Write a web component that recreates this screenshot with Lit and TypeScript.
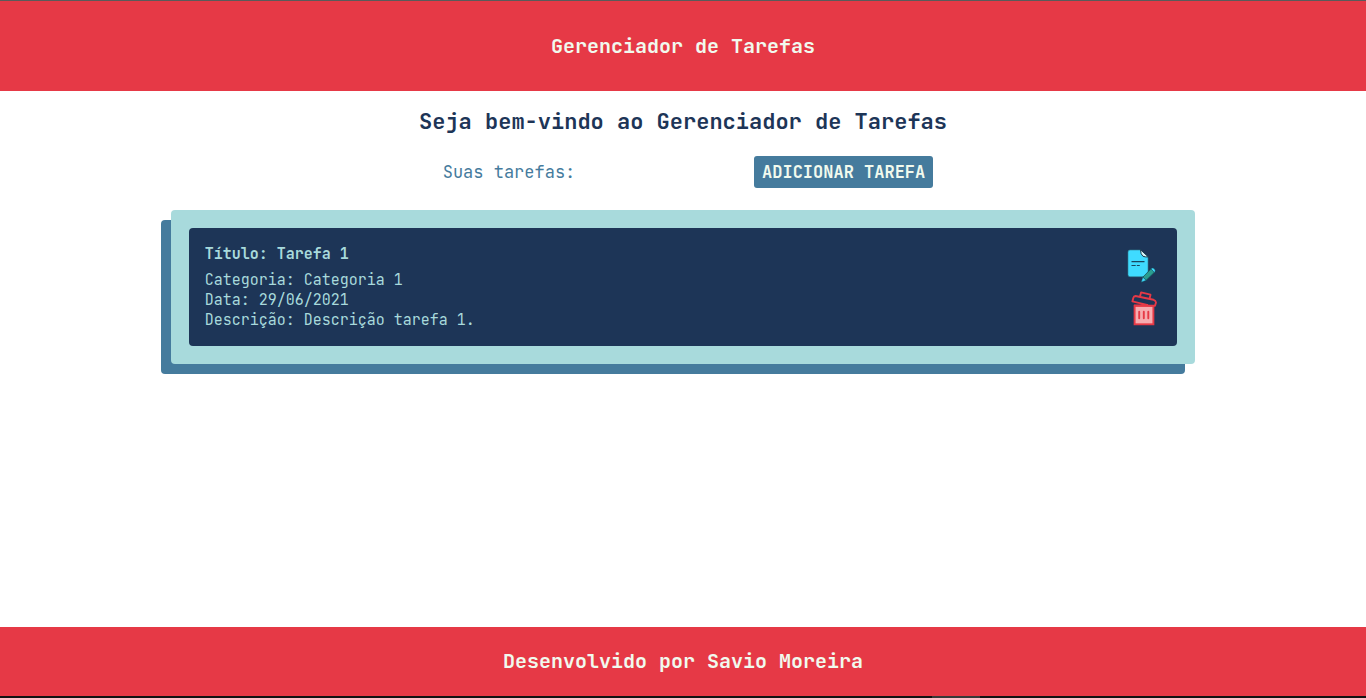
import { LitElement, html, css, svg } from "lit";
import { customElement, property, state } from "lit/decorators.js";

interface Task {
  title: string;
  category: string;
  date: string;
  description: string;
}

const editIcon = svg`
  <path d="M5 3H15.500L23 10V28Q23 29.700 21.300 29.700H5Q3 29.700 3 27.700V5Q3 3 5 3Z" fill="#3fdbff" stroke="#2f7f91" stroke-width=".6"/>
  <path d="M15.500 2.700L23.300 9.900Q20.500 10.200 18 9.300Q15.500 7.500 15.500 2.700Z" fill="#d9f5f8" stroke="#1b3a4b" stroke-width="1"/>
  <path d="M6.500 14.600H19.500M6.500 18.500H10.700M11.800 18.500H14.800" stroke="#17465f" stroke-width="1.100"/>
  <path d="M17.800 30.200L26 21.800L29.300 25.400L21.200 33.300Z" fill="#2a9d8f" stroke="#17505c" stroke-width=".8"/>
  <path d="M26 21.800L27.300 21Q28.500 21 29.700 22.300Q30.600 23.500 30 24.500L29.300 25.400ZM17.800 30.200L16.200 35.300L21.200 33.300Z" fill="#3fdbff" stroke="#17505c" stroke-width=".5"/>`;

const trashIcon = svg`
  <rect x="9.600" y="14.800" width="18.800" height="18.500" fill="#f6acb0" stroke="#e63946" stroke-width="1.900"/>
  <path d="M14.200 20.700V27.300M18.800 20.700V27.300M23.300 20.700V27.300" stroke="#e63946" stroke-width="1.900" stroke-linecap="round"/>
  <path d="M9 14.500L28.500 14.800L30 14.700L31 11.500Q30.800 9.500 28.500 8.800L10.500 5Q8.800 5 8.300 7L7.400 10.400L23 14.200" fill="#1d3557" stroke="#e63946" stroke-width="1.900" stroke-linejoin="round"/>
  <path d="M14.900 5.700L16.100 1.400L25.500 3.700L24.600 7.600" fill="none" stroke="#e63946" stroke-width="1.900" stroke-linejoin="round"/>`;

@customElement("task-card")
export class TaskCard extends LitElement {
  @property({ attribute: false }) task!: Task;

  static styles = css`
    :host {
      display: block;
    }
    .card {
      display: flex;
      align-items: center;
      justify-content: space-between;
      gap: 16px;
      padding: 16px;
      border-radius: 4px;
      background: #1d3557;
      color: #a8dadc;
      font-size: 15px;
      line-height: 20px;
    }
    .title {
      margin: 0 0 6px;
      font-size: 15px;
    }
    .line {
      margin: 0;
    }
    .actions {
      display: flex;
      flex-direction: column;
      gap: 8px;
    }
    .action {
      display: block;
      padding: 0;
      border: 0;
      background: none;
      cursor: pointer;
    }
    .icon {
      display: block;
      width: 36px;
      height: 36px;
    }
  `;

  render() {
    const { title, category, date, description } = this.task;
    return html`
      <article class="card">
        <div>
          <h3 class="title">Título: ${title}</h3>
          <p class="line">Categoria: ${category}</p>
          <p class="line">Data: ${date}</p>
          <p class="line">Descrição: ${description}</p>
        </div>
        <div class="actions">
          <button class="action" aria-label="Editar">
            <svg class="icon" viewBox="0 0 36 36">${editIcon}</svg>
          </button>
          <button class="action" aria-label="Excluir">
            <svg class="icon" viewBox="0 0 36 36">${trashIcon}</svg>
          </button>
        </div>
      </article>
    `;
  }
}

@customElement("app-root")
export class AppRoot extends LitElement {
  @state() private tasks: Task[] = [
    {
      title: "Tarefa 1",
      category: "Categoria 1",
      date: "29/06/2021",
      description: "Descrição tarefa 1.",
    },
  ];

  static styles = css`
    :host {
      display: flex;
      flex-direction: column;
      min-height: 100vh;
      background: #fff;
      font-family: "JetBrains Mono", "DejaVu Sans Mono", monospace;
    }
    .header,
    .footer {
      background: #e63946;
      color: #f1faee;
      text-align: center;
      font-size: 20px;
      font-weight: 700;
      line-height: 26px;
    }
    .header {
      padding: 32px 16px;
      border-top: 1px solid #5a5a5a;
    }
    .footer {
      padding: 21px 16px 22px;
    }
    .brand {
      margin: 0;
      font-size: 20px;
    }
    .main {
      flex: 1;
      display: flex;
      flex-direction: column;
      align-items: center;
      padding: 16px 0;
    }
    .welcome {
      margin: 0;
      color: #1d3557;
      font-size: 22px;
      line-height: 29px;
      text-align: center;
    }
    .toolbar {
      display: flex;
      align-items: center;
      justify-content: space-around;
      width: 49%;
      margin: 20px 0 22px;
      padding-left: 10px;
    }
    .label {
      color: #457b9d;
      font-size: 17px;
      line-height: 22px;
    }
    .add {
      padding: 5px 8px;
      border: 0;
      border-radius: 3px;
      background: #457b9d;
      color: #f1faee;
      font: inherit;
      font-size: 17px;
      font-weight: 700;
      line-height: 22px;
      cursor: pointer;
    }
    .list {
      box-sizing: border-box;
      display: grid;
      gap: 16px;
      width: 75%;
      padding: 18px;
      border-radius: 4px;
      background: #a8dadc;
      box-shadow: -10px 10px #457b9d;
    }
    .edge {
      display: flex;
      justify-content: flex-end;
      height: 2px;
      background: #111;
    }
    .thumb {
      width: 48px;
      margin-right: 386px;
      background: #383838;
    }
  `;

  render() {
    return html`
      <header class="header"><h1 class="brand">Gerenciador de Tarefas</h1></header>
      <main class="main">
        <h2 class="welcome">Seja bem-vindo ao Gerenciador de Tarefas</h2>
        <div class="toolbar">
          <span class="label">Suas tarefas:</span>
          <button class="add">ADICIONAR TAREFA</button>
        </div>
        <section class="list">
          ${this.tasks.map((task) => html`<task-card .task=${task}></task-card>`)}
        </section>
      </main>
      <footer class="footer">Desenvolvido por Savio Moreira</footer>
      <div class="edge"><div class="thumb"></div></div>
    `;
  }
}
